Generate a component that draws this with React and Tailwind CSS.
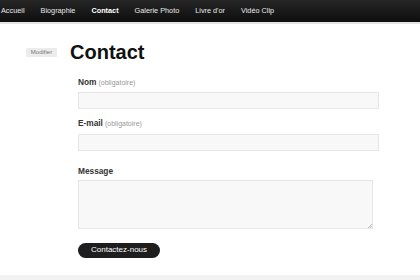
import React from 'react';

const NAV = ['Accueil', 'Biographie', 'Contact', 'Galerie Photo', "Livre d'or", 'Vidéo Clip'];

const Label = ({ name, required }) => (
  <label className="block text-[8.3px] leading-none font-bold text-[#333]">
    {name}
    {required && <span className="ml-[2px] text-[7px] font-normal text-[#999]">(obligatoire)</span>}
  </label>
);

export default function App() {
  return (
    <div className="w-[420px] h-[280px] overflow-hidden bg-white font-['Liberation_Sans',Arial,sans-serif]">
      {/* Top menu */}
      <nav className="h-[22px] flex items-center bg-gradient-to-b from-[#262626] to-[#0e0e0e] border-b-2 border-[#e4e4e4] box-content">
        <ul className="flex items-center -ml-[7px]">
          {NAV.map(item => (
            <li
              key={item}
              className={`px-[8px] text-[7.3px] leading-none ${item === 'Contact' ? 'font-bold text-white' : 'text-[#e8e8e8]'}`}
            >
              {item}
            </li>
          ))}
        </ul>
      </nav>

      {/* Page title */}
      <div className="flex items-center pt-[18px] pl-[26px]">
        <span className="w-[31px] h-[9px] flex items-center justify-center bg-[#ececec] text-[6px] leading-none text-[#777] rounded-[1px]">
          Modifier
        </span>
        <h1 className="ml-[13px] text-[20px] leading-none font-bold text-[#111]">Contact</h1>
      </div>

      {/* Form */}
      <form className="pl-[78px] pt-[16px]">
        <Label name="Nom" required />
        <input type="text" className="block mt-[6px] w-[301px] h-[17px] bg-[#f8f8f8] border border-[#e6e6e6]" />

        <div className="mt-[10px]">
          <Label name="E-mail" required />
        </div>
        <input type="text" className="block mt-[6px] w-[301px] h-[17px] bg-[#f8f8f8] border border-[#e6e6e6]" />

        <div className="mt-[16px]">
          <Label name="Message" />
        </div>
        <div className="relative mt-[5px] w-[295px] h-[49px]">
          <textarea className="block w-full h-full resize-none bg-[#f8f8f8] border border-[#e6e6e6]" />
          {/* resize grip */}
          <svg className="absolute right-[1px] bottom-[1px] w-[5px] h-[5px]" viewBox="0 0 5 5">
            <path d="M5 1L1 5M5 3L3 5" stroke="#a0a0a0" strokeWidth="0.7" fill="none" />
          </svg>
        </div>

        <button
          type="button"
          className="mt-[14px] h-[15px] px-[13px] rounded-full bg-[#1e1e1e] text-white text-[8px] leading-none font-normal"
        >
          Contactez-nous
        </button>
      </form>

      <div className="mt-[16px] h-[20px] bg-[#f2f2f2]" />
    </div>
  );
}
